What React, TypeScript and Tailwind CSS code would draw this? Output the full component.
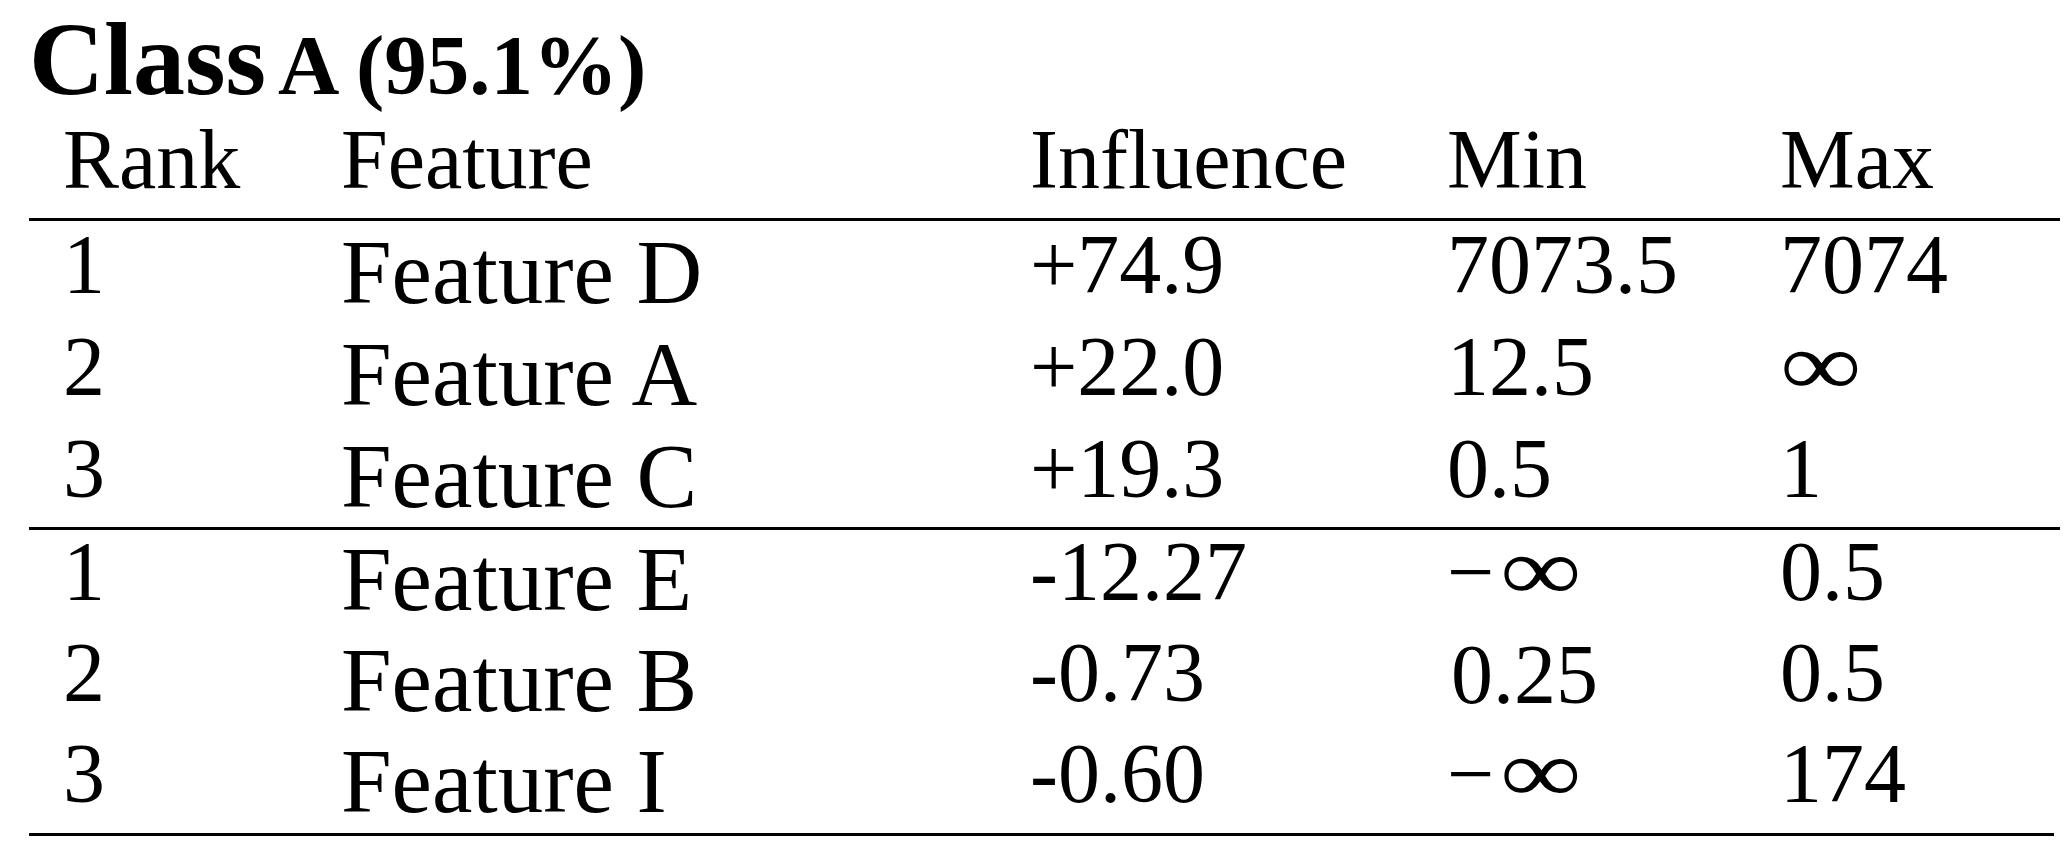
import React from "react";

type Row = {
  rank: string;
  feature: string;
  influence: string;
  min: string;
  max: string;
  minNudge?: boolean;
};

const positive: Row[] = [
  { rank: "1", feature: "Feature D", influence: "+74.9", min: "7073.5", max: "7074" },
  { rank: "2", feature: "Feature A", influence: "+22.0", min: "12.5", max: "∞" },
  { rank: "3", feature: "Feature C", influence: "+19.3", min: "0.5", max: "1" },
];

const negative: Row[] = [
  { rank: "1", feature: "Feature E", influence: "-12.27", min: "−∞", max: "0.5" },
  { rank: "2", feature: "Feature B", influence: "-0.73", min: "0.25", max: "0.5", minNudge: true },
  { rank: "3", feature: "Feature I", influence: "-0.60", min: "−∞", max: "174" },
];

const cols = "grid grid-cols-[278px_689px_417px_333px_1fr] pl-[34px]";

// math-style infinity: the font's own glyph is too small next to the digits
function Inf() {
  return (
    <span className="inline-block origin-left scale-x-[1.27] text-[90px] leading-[60px]">∞</span>
  );
}

function Value({ text }: { text: string }) {
  if (text === "∞") return <Inf />;
  if (text === "−∞") {
    return (
      <>
        <span className="mr-[6px]">−</span>
        <Inf />
      </>
    );
  }
  return <>{text}</>;
}

function DataRow({ row, tall }: { row: Row; tall: boolean }) {
  const rowCls = tall ? "h-[102px] leading-[87px]" : "h-[101px] leading-[83px]";
  return (
    <div className={`${cols} ${rowCls} text-[84px] whitespace-nowrap`}>
      <div>{row.rank}</div>
      <div className="pt-[8px] text-[91px]">{row.feature}</div>
      <div>{row.influence}</div>
      <div className={row.minNudge ? "pt-[2px] pl-[4px]" : ""}>
        <Value text={row.min} />
      </div>
      <div>
        <Value text={row.max} />
      </div>
    </div>
  );
}

export default function App() {
  return (
    <div className="w-[2070px] h-[850px] bg-white text-black font-['Liberation_Serif','Times_New_Roman',serif] overflow-hidden">
      <div className="pl-[29px] pr-[10px]">
        <div className="h-[118px] leading-[118px] text-[104px] font-bold whitespace-nowrap">
          Class<span className="ml-[12px] text-[85px]">A (95.1%)</span>
        </div>
        <div className={`${cols} h-[100px] leading-[83px] text-[84px]`}>
          <div>Rank</div>
          <div>Feature</div>
          <div>Influence</div>
          <div>Min</div>
          <div>Max</div>
        </div>
        <div className="border-t-[3px] border-black" />
        {positive.map((r) => (
          <DataRow key={r.feature} row={r} tall />
        ))}
        <div className="border-t-[3px] border-black" />
        {negative.map((r) => (
          <DataRow key={r.feature} row={r} tall={false} />
        ))}
        <div className="border-t-[3px] border-black mr-[6px]" />
      </div>
    </div>
  );
}
